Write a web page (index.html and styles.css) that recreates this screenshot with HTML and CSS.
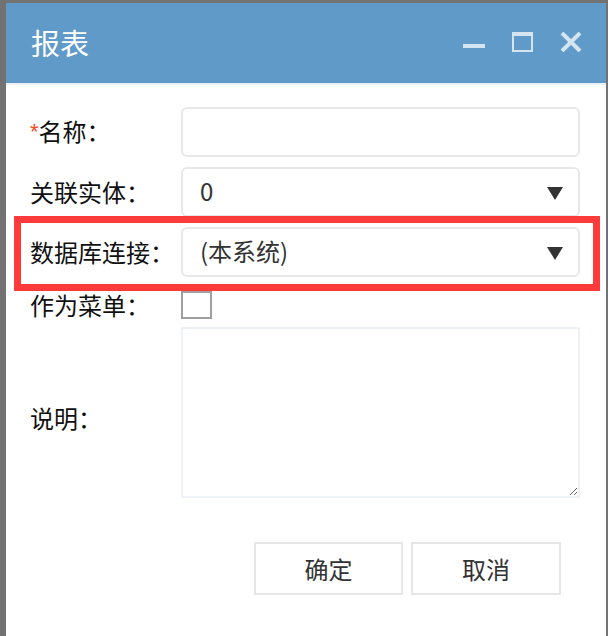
FILE: index.html
```html
<!DOCTYPE html>
<html lang="zh">
<head>
<meta charset="utf-8">
<link rel="stylesheet" href="styles.css">
</head>
<body>
<div class="dialog">
  <div class="header">
    <div class="title">报表</div>
    <div class="tools">
      <svg class="ic" width="22" height="20" viewBox="0 0 22 20"><rect x="0" y="12" width="22" height="4" fill="#d4e4f1"/></svg>
      <svg class="ic" width="21" height="20" viewBox="0 0 21 20"><path d="M0 0H21V20H0Z M2 4V18H19V4Z" fill="#d4e4f1" fill-rule="evenodd"/></svg>
      <svg class="ic" width="22" height="20" viewBox="0 0 22 20"><path d="M2 1L20 19M20 1L2 19" stroke="#d4e4f1" stroke-width="4"/></svg>
    </div>
  </div>
  <div class="form">
    <div class="row">
      <label class="lbl"><span class="req">*</span>名称：</label>
      <div class="field input"></div>
    </div>
    <div class="row">
      <label class="lbl">关联实体：</label>
      <div class="field select"><span class="val">0</span><span class="arrow"></span></div>
    </div>
    <div class="row marked">
      <label class="lbl">数据库连接：</label>
      <div class="field select"><span class="val">(本系统)</span><span class="arrow"></span></div>
    </div>
    <div class="row row-check">
      <label class="lbl">作为菜单：</label>
      <div class="check"></div>
    </div>
    <div class="row row-text">
      <label class="lbl lbl-text">说明：</label>
      <textarea class="area"></textarea>
    </div>
    <div class="buttons">
      <div class="btn">确定</div>
      <div class="btn">取消</div>
    </div>
  </div>
</div>
</body>
</html>
```
FILE: styles.css
```css
* { box-sizing: border-box; }
html, body { margin: 0; padding: 0; }
body {
  width: 608px;
  height: 636px;
  background: #727272;
  padding: 3px 2px 0 6px;
  font-family: "Noto Sans CJK SC", "Noto Sans", sans-serif;
  overflow: hidden;
}
.dialog {
  width: 600px;
  height: 633px;
  background: #fff;
}
.header {
  height: 82px;
  background: #5f9ac9;
  border-bottom: 2px solid #eaf1f7;
  display: flex;
  align-items: center;
  padding: 0 24px 0 25px;
}
.title {
  color: #fff;
  font-size: 29px;
  line-height: 1;
  flex: 1;
  margin-top: -2px;
}
.tools {
  display: flex;
  align-items: center;
  gap: 27px;
  margin-top: -2px;
}
.ic { display: block; }
.form {
  padding: 22px 26px 0 24px;
}
.row {
  display: flex;
  align-items: center;
  margin-bottom: 10px;
}
.lbl {
  width: 151px;
  flex: none;
  font-size: 24px;
  color: #111;
  line-height: 1;
  margin-top: -1px;
  white-space: nowrap;
}
.req {
  color: #f04a22;
  font-family: "Liberation Sans", sans-serif;
  font-size: 22px;
  position: relative;
  top: -2px;
}
.field {
  flex: 1;
  height: 50px;
  border: 2px solid #e8e8e8;
  border-radius: 6px;
  background: #fff;
  display: flex;
  align-items: center;
  padding: 0 15px 0 17px;
}
.val {
  flex: 1;
  font-size: 24px;
  color: #333;
  line-height: 1;
  margin-top: -2px;
}
.arrow {
  width: 0;
  height: 0;
  border-left: 8px solid transparent;
  border-right: 8px solid transparent;
  border-top: 13px solid #333;
  margin-top: 3px;
}
.marked { position: relative; }
.marked::after {
  content: "";
  position: absolute;
  left: -16px;
  right: -20px;
  top: -11px;
  bottom: -14px;
  border: 7px solid #ff3a3a;
  pointer-events: none;
}
.row-check {
  margin-top: 14px;
  margin-bottom: 8px;
  height: 28px;
}
.check {
  width: 31px;
  height: 28px;
  border: 2px solid #a0a0a0;
  background: #fff;
}
.row-text { margin-bottom: 0; }
.lbl-text { margin-top: 10px; }
.area {
  flex: 1;
  height: 171px;
  border: 2px solid #eef2f6;
  border-radius: 0;
  resize: both;
  outline: none;
  margin: 0;
  font-family: inherit;
}
.buttons {
  display: flex;
  justify-content: flex-end;
  gap: 8px;
  margin-top: 44px;
  padding-right: 19px;
}
.btn {
  width: 149px;
  height: 53px;
  border: 2px solid #e6e6e6;
  display: flex;
  align-items: center;
  justify-content: center;
  font-size: 24px;
  line-height: 1;
  color: #333;
  background: #fff;
}
.btn + .btn { width: 150px; }
```
